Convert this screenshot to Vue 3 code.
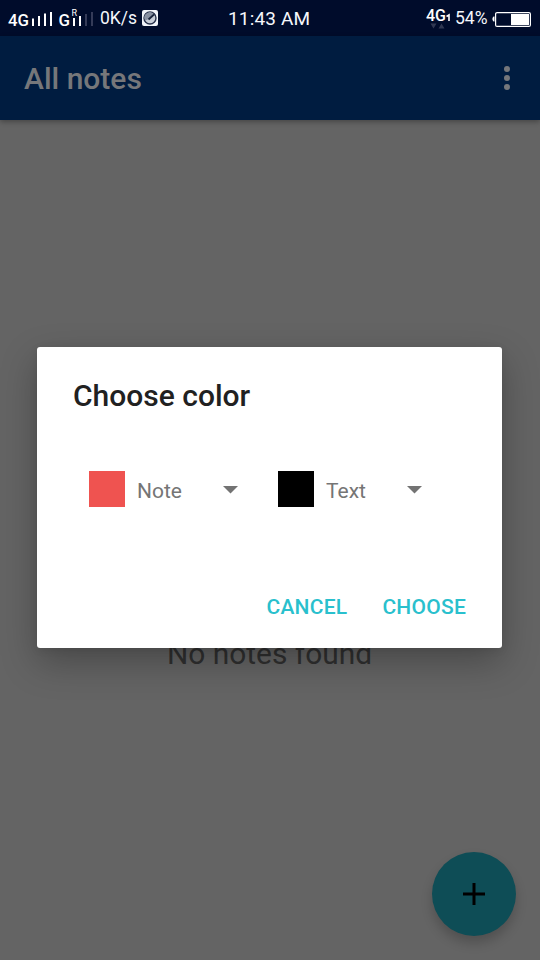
<script setup>
const pickers = [
  { label: 'Note', kind: 'note' },
  { label: 'Text', kind: 'ink' }
]
</script>

<template>
  <div class="screen">
    <header class="status">
      <svg class="signals" width="96" height="36" viewBox="0 0 96 36">
        <text class="net" x="8" y="26" textLength="21" lengthAdjust="spacingAndGlyphs">4G</text>
        <path d="M33 18.500V26M39 16v10M45 13.500V26M51 12v14" stroke="#fff" stroke-width="2" />
        <text class="net" x="58.500" y="26" textLength="11.500" lengthAdjust="spacingAndGlyphs">G</text>
        <text class="roam" x="71.500" y="16">R</text>
        <path d="M74 18v8M80 16v10" stroke="#fff" stroke-width="2" />
        <path d="M86 14v12M92 12v14" stroke="#343b58" stroke-width="2" />
      </svg>
      <span class="speed">0K/s</span>
      <svg class="gauge" width="16" height="16" viewBox="0 0 16 16">
        <rect width="16" height="16" rx="2" fill="#f2f5fa" />
        <circle cx="8" cy="8" r="6" fill="#c8ced8" stroke="#26304a" stroke-width="1.400" />
        <path d="M3.200 10.500A5.500 5.500 0 0 1 11.500 3.500L7 9Z" fill="#8891a2" />
        <path d="M6.500 9.500 12 4.500" stroke="#18233b" stroke-width="1.800" />
      </svg>
      <span class="clock">11:43 AM</span>
      <svg class="data" width="28" height="36" viewBox="0 0 28 36">
        <text class="net" x="1" y="21" textLength="20" lengthAdjust="spacingAndGlyphs">4G</text>
        <path d="M21.500 16.500 24 15v6" fill="none" stroke="#fff" stroke-width="1.600" />
        <path d="M5.500 23.500h6L8.500 28.500ZM13.500 28.500h6L16.500 23.500Z" fill="#303852" />
      </svg>
      <span class="percent">54%</span>
      <svg class="battery" width="40" height="16" viewBox="0 0 40 16">
        <path d="M2.500 5.500H1.500L.5 7v2l1 1.500h1Z" fill="#fff" />
        <rect x="3.600" y="1.600" width="34.800" height="13.800" rx="1.500" fill="none" stroke="#fff" stroke-width="1.200" />
        <rect x="19" y="3" width="18" height="11" fill="#fff" />
      </svg>
    </header>

    <div class="toolbar">
      <h1>All notes</h1>
      <svg width="6" height="24" viewBox="0 0 6 24" fill="#75777b">
        <circle cx="3" cy="3" r="3" /><circle cx="3" cy="12" r="3" /><circle cx="3" cy="21" r="3" />
      </svg>
    </div>

    <main class="content">
      <p class="empty">No notes found</p>
      <section class="dialog" role="dialog">
        <h2>Choose color</h2>
        <div class="pickers">
          <div v-for="p in pickers" :key="p.kind" class="picker" :class="p.kind">
            <span class="swatch"></span>
            <span class="label">{{ p.label }}</span>
            <svg class="arrow" width="15" height="8" viewBox="0 0 15 8"><path d="M0 0h15L7.500 7.500Z" fill="#737373" /></svg>
          </div>
        </div>
        <div class="actions">
          <button class="cancel">CANCEL</button>
          <button class="choose">CHOOSE</button>
        </div>
      </section>
      <button class="fab" aria-label="Add">
        <svg width="22" height="22" viewBox="0 0 22 22"><path d="M11 0v22M0 11h22" stroke="#000" stroke-width="3" /></svg>
      </button>
    </main>
  </div>
</template>

<style>
body { margin: 0; background: #646464; }
</style>

<style scoped>
.screen {
  width: 540px;
  height: 960px;
  display: flex;
  flex-direction: column;
  overflow: hidden;
  background: #646464;
  font-family: Roboto, "Liberation Sans", sans-serif;
}
h1, h2, p { margin: 0; font-weight: 500; }
svg { display: block; flex: none; }
button { border: 0; padding: 0; background: none; font: inherit; }

.status {
  height: 36px;
  flex: none;
  display: flex;
  align-items: center;
  background: #000c2b;
  color: #f5f7fb;
  white-space: nowrap;
}
.net { font-size: 17px; font-weight: 500; fill: #fff; }
.roam { font-size: 9px; font-weight: 400; fill: #fff; }
.speed { width: 38px; margin-left: 4px; font-size: 17.500px; line-height: 20px; }
.gauge { margin-left: 4px; }
.clock { width: 84px; margin-left: 70px; padding-top: 2px; font-size: 19px; line-height: 22px; letter-spacing: .15px; }
.data { margin-left: 113px; }
.percent { width: 34px; margin-left: 2px; font-size: 17.500px; line-height: 20px; }
.battery { margin: 1px 0 0 3px; }

.toolbar {
  position: relative;
  z-index: 1;
  height: 84px;
  flex: none;
  box-sizing: border-box;
  padding: 0 30px 0 24px;
  display: flex;
  align-items: center;
  justify-content: space-between;
  background: #001c40;
  box-shadow: 0 2px 5px rgba(0, 0, 0, .3);
}
h1 { padding-top: 2px; font-size: 30px; line-height: 36px; color: #76777a; }

.content { position: relative; flex: 1; }
.empty {
  padding: 516px 1px 0 0;
  text-align: center;
  font-size: 29.900px;
  line-height: 36px;
  font-weight: 400;
  color: #303030;
}
.dialog {
  position: absolute;
  left: 37px;
  top: 227px;
  width: 465px;
  height: 301px;
  box-sizing: border-box;
  padding: 31px 36px 23px;
  display: flex;
  flex-direction: column;
  background: #fff;
  border-radius: 3px;
  box-shadow: 0 14px 36px rgba(0, 0, 0, .28), 0 2px 8px rgba(0, 0, 0, .08);
}
h2 { font-size: 30px; line-height: 36px; color: #212121; }
.pickers { display: flex; padding: 57px 0 0 16px; }
.picker { display: flex; align-items: center; height: 36px; }
.note { width: 189px; }
.swatch { width: 36px; height: 36px; background: #ef5350; }
.ink .swatch { background: #000; }
.label { padding: 5px 0 0 12px; box-sizing: border-box; font-size: 21px; line-height: 25px; color: #757575; }
.note .label { width: 98px; }
.ink .label { width: 93px; }
.arrow { margin-top: 2px; }
.actions { margin-top: auto; display: flex; justify-content: flex-end; gap: 35px; }
.actions button { font-size: 21px; line-height: 36px; font-weight: 500; letter-spacing: .25px; color: #29c0cd; }
.fab {
  position: absolute;
  right: 24px;
  bottom: 24px;
  width: 84px;
  height: 84px;
  display: flex;
  align-items: center;
  justify-content: center;
  border-radius: 50%;
  background: #0e4d56;
  box-shadow: 0 7px 12px rgba(0, 0, 0, .2);
}
</style>
